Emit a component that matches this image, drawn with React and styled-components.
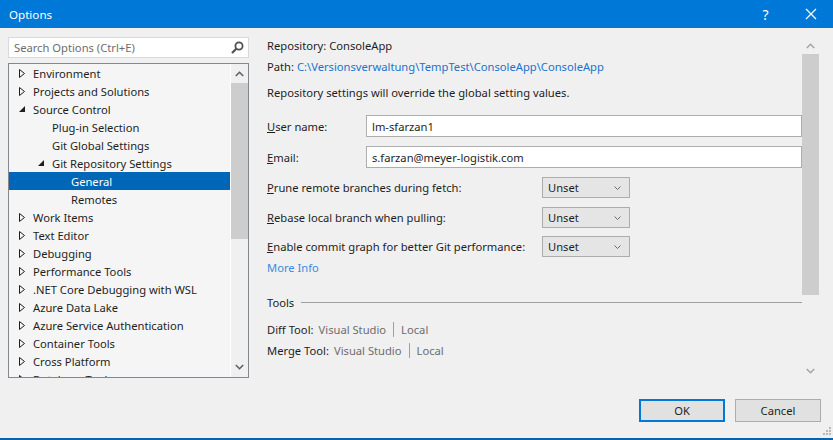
import styled, { createGlobalStyle } from 'styled-components';

const GlobalStyle = createGlobalStyle`
  html, body {
    margin: 0;
    padding: 0;
    background: #f0f0f0;
  }
  body {
    font-family: 'Noto Sans', 'Segoe UI', sans-serif;
    font-size: 11.2px;
    color: #1e1e1e;
  }
`;

const Window = styled.div`
  width: 833px;
  height: 440px;
  box-sizing: border-box;
  border-bottom: 2px solid #0a64ad;
  display: flex;
  flex-direction: column;
  position: relative;
  overflow: hidden;
`;

const TitleBar = styled.div`
  height: 28px;
  flex: none;
  background: #0078d7;
  color: #fff;
  display: flex;
  align-items: center;
  padding-left: 9px;
  font-size: 11.6px;
`;

const Title = styled.div`
  flex: 1;
`;

const TitleButton = styled.div`
  width: 45px;
  height: 28px;
  display: flex;
  align-items: center;
  justify-content: center;
  font-size: 14px;
`;

const Body = styled.div`
  flex: 1;
  display: flex;
  align-items: flex-start;
  padding: 9px 0 0 8px;
  min-height: 0;
`;

const LeftColumn = styled.div`
  width: 241px;
  display: flex;
  flex-direction: column;
  gap: 5px;
`;

const SearchBox = styled.div`
  height: 21px;
  box-sizing: border-box;
  border: 1px solid #d9d9d9;
  background: #fff;
  display: flex;
  align-items: center;
  padding: 0 4px 0 5px;
  color: #6d6d6d;
  justify-content: space-between;
`;

const TreeBox = styled.div`
  height: 315px;
  box-sizing: border-box;
  border: 1px solid #828790;
  background: #f5f5f5;
  display: flex;
  overflow: hidden;
`;

const TreeList = styled.div`
  flex: 1;
  overflow: hidden;
`;

const TreeRow = styled.div`
  height: 18px;
  display: flex;
  align-items: center;
  padding-left: ${p => 9 + p.level * 19}px;
  background: ${p => (p.selected ? '#0067b8' : 'transparent')};
  color: ${p => (p.selected ? '#fff' : '#1e1e1e')};
  white-space: nowrap;
`;

const Twisty = styled.span`
  width: 15px;
  flex: none;
  display: flex;
  align-items: center;
  padding-left: 1px;
  box-sizing: border-box;
`;

const VScroll = styled.div`
  width: 17px;
  flex: none;
  display: flex;
  flex-direction: column;
  align-items: stretch;
  background: #f0f0f0;
  border-left: ${p => (p.divider ? '1px solid #fff' : 'none')};
`;

const ScrollArrow = styled.div`
  height: ${p => p.h || 17}px;
  flex: none;
  display: flex;
  align-items: center;
  justify-content: center;
`;

const Thumb = styled.div`
  height: ${p => p.h}px;
  flex: none;
  background: #cdcdcd;
`;

const Spacer = styled.div`
  flex: 1;
`;

const RightPanel = styled.div`
  flex: 1;
  height: 342px;
  display: flex;
  margin-left: 18px;
  padding-right: 14px;
`;

const Content = styled.div`
  flex: 1;
  display: flex;
  flex-direction: column;
  min-width: 0;
`;

const Line = styled.div`
  height: 16px;
  display: flex;
  align-items: center;
  margin-top: ${p => p.mt || 0}px;
  white-space: nowrap;
`;

const Link = styled.span`
  color: ${p => p.color || '#1a73cc'};
`;

const FieldRow = styled.div`
  display: flex;
  align-items: center;
  margin-top: ${p => p.mt || 0}px;
`;

const Label = styled.div`
  width: ${p => p.w || 99}px;
  flex: none;
  white-space: nowrap;
`;

const TextInput = styled.div`
  flex: 1;
  height: 22px;
  box-sizing: border-box;
  border: 1px solid #adadad;
  background: #fff;
  display: flex;
  align-items: center;
  padding-left: 5px;
`;

const Select = styled.div`
  width: 88px;
  height: 21px;
  box-sizing: border-box;
  border: 1px solid #adadad;
  background: #e5e5e5;
  display: flex;
  align-items: center;
  justify-content: space-between;
  padding: 0 8px 0 5px;
`;

const SectionHeader = styled.div`
  display: flex;
  align-items: center;
  gap: 7px;
  margin-top: ${p => p.mt || 0}px;
  height: 16px;
`;

const Rule = styled.div`
  flex: 1;
  height: 1px;
  background: #a0a0a0;
`;

const ToolRow = styled.div`
  display: flex;
  align-items: center;
  height: 16px;
  margin-top: ${p => p.mt || 0}px;
  white-space: nowrap;
`;

const ToolValue = styled.span`
  color: #6d6d6d;
  margin-left: ${p => (p.first ? 5 : 0)}px;
`;

const Pipe = styled.span`
  display: inline-block;
  width: 1px;
  height: 15px;
  background: #a0a0a0;
  margin: 0 7px;
`;

const Footer = styled.div`
  height: 39px;
  flex: none;
  display: flex;
  justify-content: flex-end;
  align-items: flex-start;
  gap: 10px;
  padding: 0 12px 0 0;
`;

const Button = styled.div`
  width: 86px;
  height: 23px;
  box-sizing: border-box;
  border: ${p => (p.primary ? '2px solid #0078d7' : '1px solid #adadad')};
  background: #e1e1e1;
  display: flex;
  align-items: center;
  justify-content: center;
`;

const Grip = styled.svg`
  position: absolute;
  right: 2px;
  bottom: 3px;
`;

const Collapsed = () => (
  <svg width="6" height="9" viewBox="0 0 6 9">
    <polygon points="0.5,0.5 5.5,4.5 0.5,8.5" fill="none" stroke="#1e1e1e" strokeWidth="1" />
  </svg>
);

const Expanded = () => (
  <svg width="7" height="7" viewBox="0 0 7 7">
    <polygon points="6,0 6,6 0,6" fill="#1e1e1e" />
  </svg>
);

const ChevronUp = ({ color = '#606060' }) => (
  <svg width="9" height="6" viewBox="0 0 9 6">
    <polyline points="0.8,5 4.5,1.3 8.2,5" fill="none" stroke={color} strokeWidth="1.6" />
  </svg>
);

const ChevronDown = ({ color = '#606060' }) => (
  <svg width="9" height="6" viewBox="0 0 9 6">
    <polyline points="0.8,1 4.5,4.7 8.2,1" fill="none" stroke={color} strokeWidth="1.6" />
  </svg>
);

const SearchIcon = () => (
  <svg width="13" height="13" viewBox="0 0 13 13">
    <circle cx="8" cy="5" r="3.6" fill="none" stroke="#505050" strokeWidth="1.8" />
    <line x1="5.3" y1="7.7" x2="1" y2="12" stroke="#505050" strokeWidth="2.2" />
  </svg>
);

const SelectArrow = () => (
  <svg width="7" height="4" viewBox="0 0 7 4">
    <polyline points="0.5,0.5 3.5,3.5 6.5,0.5" fill="none" stroke="#6d6d6d" strokeWidth="1" />
  </svg>
);

const treeItems = [
  { text: 'Environment', level: 0, state: 'closed' },
  { text: 'Projects and Solutions', level: 0, state: 'closed' },
  { text: 'Source Control', level: 0, state: 'open' },
  { text: 'Plug-in Selection', level: 1 },
  { text: 'Git Global Settings', level: 1 },
  { text: 'Git Repository Settings', level: 1, state: 'open' },
  { text: 'General', level: 2, selected: true },
  { text: 'Remotes', level: 2 },
  { text: 'Work Items', level: 0, state: 'closed' },
  { text: 'Text Editor', level: 0, state: 'closed' },
  { text: 'Debugging', level: 0, state: 'closed' },
  { text: 'Performance Tools', level: 0, state: 'closed' },
  { text: '.NET Core Debugging with WSL', level: 0, state: 'closed' },
  { text: 'Azure Data Lake', level: 0, state: 'closed' },
  { text: 'Azure Service Authentication', level: 0, state: 'closed' },
  { text: 'Container Tools', level: 0, state: 'closed' },
  { text: 'Cross Platform', level: 0, state: 'closed' },
  { text: 'Database Tools', level: 0, state: 'closed' }
];

const TreeItem = ({ text, level, state, selected }) => (
  <TreeRow level={level} selected={selected}>
    <Twisty>
      {state === 'closed' && <Collapsed />}
      {state === 'open' && <Expanded />}
    </Twisty>
    {text}
  </TreeRow>
);

const SelectField = ({ label, mt }) => (
  <FieldRow mt={mt}>
    <Label w={275}>{label}</Label>
    <Select>
      Unset
      <SelectArrow />
    </Select>
  </FieldRow>
);

const ToolLine = ({ name, mt }) => (
  <ToolRow mt={mt}>
    {name}
    <ToolValue first>Visual Studio</ToolValue>
    <Pipe />
    <ToolValue>Local</ToolValue>
  </ToolRow>
);

const App = () => (
  <>
    <GlobalStyle />
    <Window>
      <TitleBar>
        <Title>Options</Title>
        <TitleButton>?</TitleButton>
        <TitleButton>
          <svg width="12" height="12" viewBox="0 0 12 12">
            <path d="M1 1 L11 11 M11 1 L1 11" stroke="#fff" strokeWidth="1.2" />
          </svg>
        </TitleButton>
      </TitleBar>

      <Body>
        <LeftColumn>
          <SearchBox>
            Search Options (Ctrl+E)
            <SearchIcon />
          </SearchBox>
          <TreeBox>
            <TreeList>
              {treeItems.map(item => (
                <TreeItem key={item.text} {...item} />
              ))}
            </TreeList>
            <VScroll divider>
              <ScrollArrow h={19}>
                <ChevronUp />
              </ScrollArrow>
              <Thumb h={156} />
              <Spacer />
              <ScrollArrow h={21}>
                <ChevronDown />
              </ScrollArrow>
            </VScroll>
          </TreeBox>
        </LeftColumn>

        <RightPanel>
          <Content>
            <Line>Repository: ConsoleApp</Line>
            <Line mt={5}>
              Path:&nbsp;<Link>C:\Versionsverwaltung\TempTest\ConsoleApp\ConsoleApp</Link>
            </Line>
            <Line mt={10}>Repository settings will override the global setting values.</Line>

            <FieldRow mt={15}>
              <Label>
                <u>U</u>ser name:
              </Label>
              <TextInput>lm-sfarzan1</TextInput>
            </FieldRow>
            <FieldRow mt={9}>
              <Label>
                <u>E</u>mail:
              </Label>
              <TextInput>s.farzan@meyer-logistik.com</TextInput>
            </FieldRow>

            <SelectField
              mt={9}
              label={
                <>
                  <u>P</u>rune remote branches during fetch:
                </>
              }
            />
            <SelectField
              mt={9}
              label={
                <>
                  <u>R</u>ebase local branch when pulling:
                </>
              }
            />
            <SelectField
              mt={8}
              label={
                <>
                  <u>E</u>nable commit graph for better Git performance:
                </>
              }
            />
            <Line mt={2}>
              <Link color="#3b8ce0">More Info</Link>
            </Line>

            <SectionHeader mt={19}>
              Tools
              <Rule />
            </SectionHeader>
            <ToolLine name="Diff Tool:" mt={11} />
            <ToolLine name="Merge Tool:" mt={5} />
          </Content>
          <VScroll>
            <ScrollArrow h={17}>
              <ChevronUp color="#a6a6a6" />
            </ScrollArrow>
            <Thumb h={241} />
            <Spacer />
            <ScrollArrow h={17}>
              <ChevronDown color="#a6a6a6" />
            </ScrollArrow>
          </VScroll>
        </RightPanel>
      </Body>

      <Footer>
        <Button primary>OK</Button>
        <Button>Cancel</Button>
      </Footer>
      <Grip width="9" height="9" viewBox="0 0 9 9">
        {[
          [7, 1],
          [7, 4],
          [4, 4],
          [7, 7],
          [4, 7],
          [1, 7]
        ].map(([x, y]) => (
          <rect key={`${x}-${y}`} x={x} y={y} width="2" height="2" fill="#b8b8b8" />
        ))}
      </Grip>
    </Window>
  </>
);

export default App;
